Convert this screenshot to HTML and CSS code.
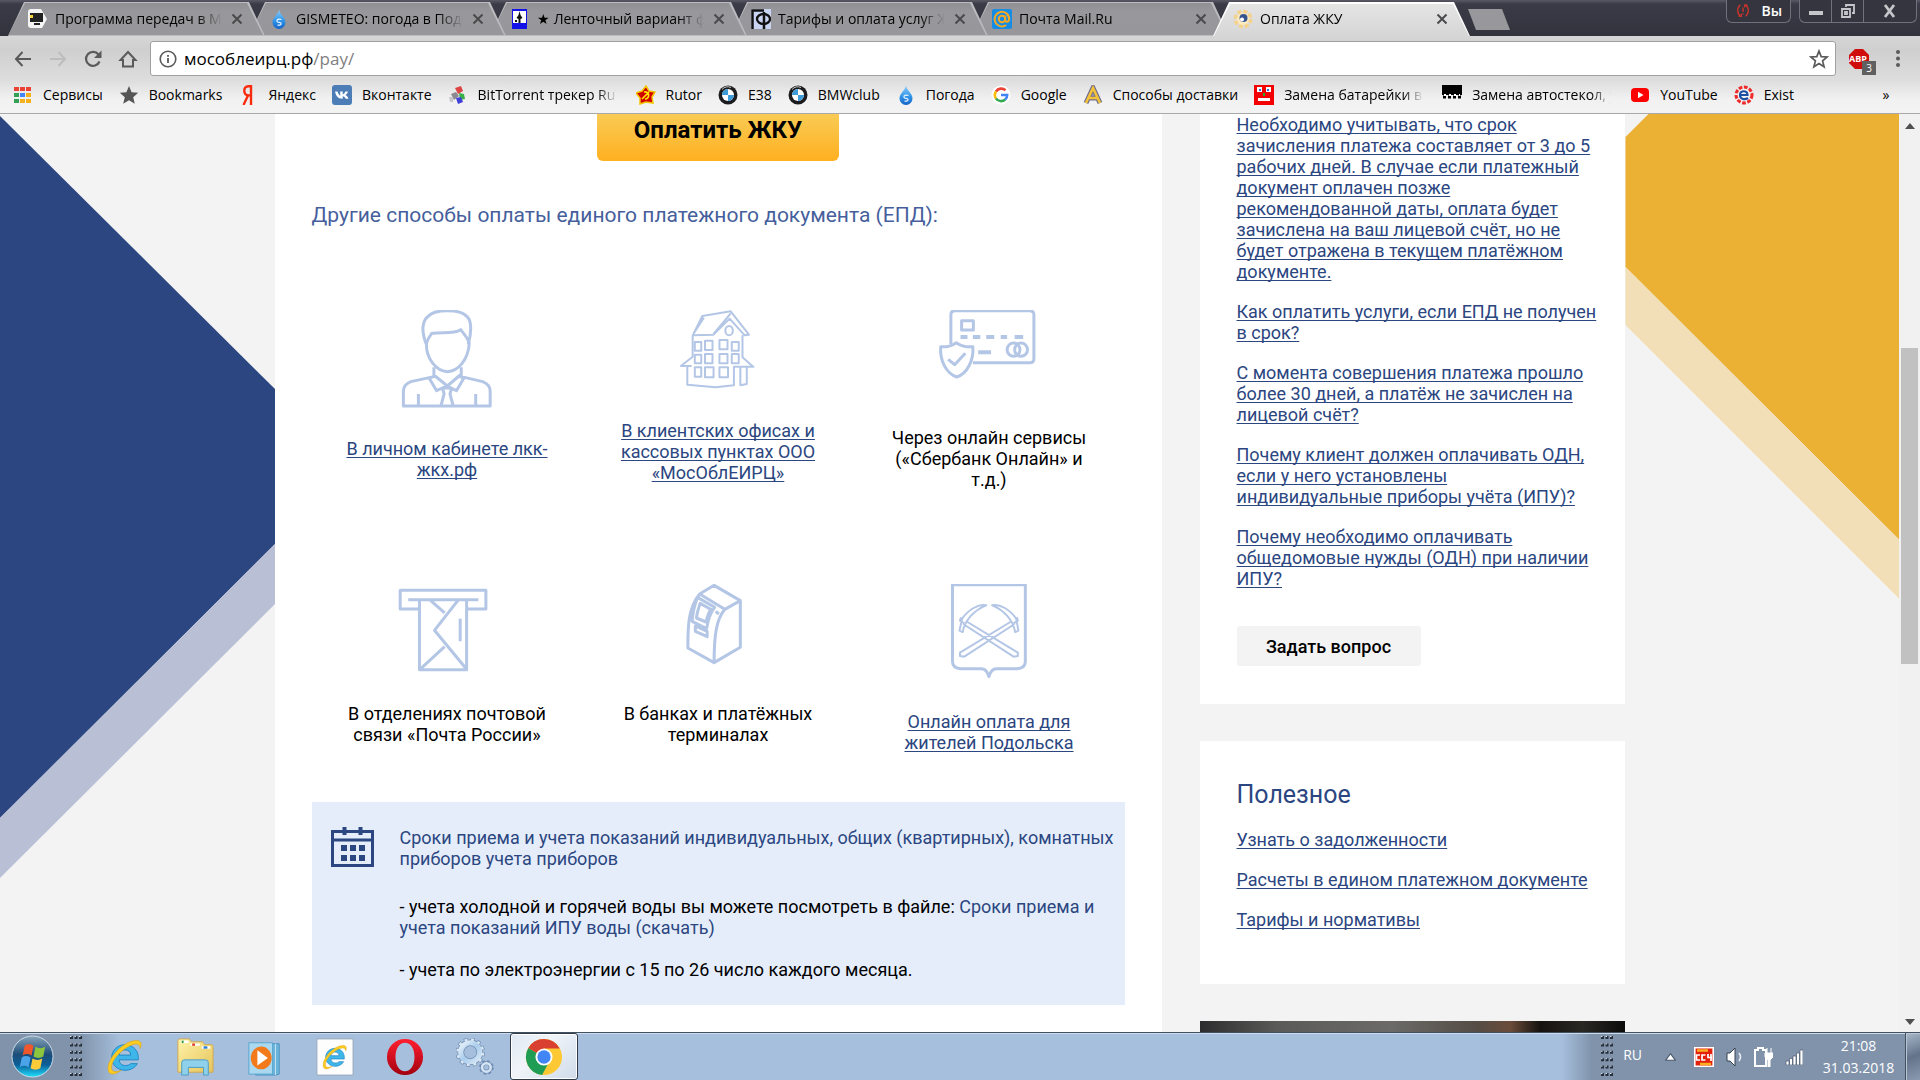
FILE: index.html
```html
<!DOCTYPE html>
<html lang="ru">
<head>
<meta charset="utf-8">
<title>Оплата ЖКУ</title>
<link rel="stylesheet" href="styles.css">
</head>
<body>
<svg class="defs" aria-hidden="true">
  <defs>
    <symbol id="x" viewBox="0 0 12 12"><path d="M1.500 1.500l9 9M10.500 1.500l-9 9" stroke="#4a4a4c" stroke-width="2" fill="none"/></symbol>
    <linearGradient id="water" x1="0" y1="0" x2="0" y2="1"><stop offset="0" stop-color="#8fd0fa"/><stop offset=".6" stop-color="#2f93e8"/><stop offset="1" stop-color="#1663c4"/></linearGradient>
    <symbol id="drop" viewBox="0 0 20 20"><path d="M10 0C10 5 3.500 8 3.500 13.500a6.500 6.500 0 0 0 13 0C16.500 8 10 5 10 0z" fill="url(#water)"/><path d="M12.500 10.500c-3-1-5 0-4.500 1.800s3.500.4 4 2-1.500 2.200-3.500 1.700" stroke="#e8f6ff" stroke-width="1.200" fill="none"/></symbol>
    <symbol id="bmw" viewBox="0 0 20 20"><circle cx="10" cy="10" r="9.500" fill="#1c1c1e"/><circle cx="10" cy="10" r="6" fill="#fff"/><path d="M10 10V4a6 6 0 0 0-6 6zM10 10v6a6 6 0 0 0 6-6z" fill="#3d9bd8"/><path d="M4 4.500a8 8 0 0 1 9-2" stroke="#c9c9c9" fill="none"/></symbol>
    <symbol id="ie" viewBox="0 0 40 40"><path d="M33 27c-3 5-8 7-13 7C12 34 6 28 6 20.500S12 7 20 7s14 6 14 13.500V23H14c0 4 3 6 6.500 6 2.500 0 4.500-1 5.500-2zM14 18h12c0-3.500-2.500-5.500-6-5.500s-6 2-6 5.500z" fill="#3fb6ea" stroke="#1f86c4"/><path d="M36 11C40 2 32 0 21 6 9 13-1 28 3 36c3 4 9 1 13-2-5 2-9 2-10-1-2-6 6-17 16-23 8-5 14-5 14 1z" fill="#fbcb22" stroke="#d9a514" stroke-width=".6"/></symbol>
    <symbol id="grip" viewBox="0 0 12 42"><path d="M0 1.500h12M0 8.900h12M0 16.300h12M0 23.700h12M0 31.100h12M0 38.500h12" stroke="#26303d" stroke-width="3" stroke-dasharray="3 1.500"/><path d="M0 .5h12M0 7.900h12M0 15.300h12M0 22.700h12M0 30.100h12M0 37.500h12" stroke="#dbe3ec" stroke-dasharray="1.500 3"/></symbol>
    <linearGradient id="orb" x1="0" y1="0" x2="0" y2="1"><stop offset="0" stop-color="#8aa5ba"/><stop offset=".45" stop-color="#1d4d78"/><stop offset=".7" stop-color="#0b5f98"/><stop offset="1" stop-color="#1fe0ff"/></linearGradient>
    <linearGradient id="opera" x1="0" y1="0" x2="0" y2="1"><stop offset="0" stop-color="#ff1f30"/><stop offset="1" stop-color="#a3000f"/></linearGradient>
    <linearGradient id="folder" x1="0" y1="0" x2="1" y2="1"><stop offset="0" stop-color="#fff3a8"/><stop offset="1" stop-color="#e6c45c"/></linearGradient>
    <linearGradient id="steel" x1="0" y1="0" x2="1" y2="1"><stop offset="0" stop-color="#eaf3fb"/><stop offset=".5" stop-color="#a9cdec"/><stop offset="1" stop-color="#d8e8f6"/></linearGradient>
  </defs>
</svg>

<header class="browser">
  <div class="tabstrip">
    <nav class="tabs" aria-label="Вкладки">
      <div class="tab t1"><svg class="fav" viewBox="0 0 20 20"><path d="M0 3q0-3 3-3h10l6 10-5 9H3q-3 0-3-3z" fill="#f4f4f4"/><path d="M2 4h13v9H2z" fill="#222"/><path d="M6 15h6" stroke="#222" stroke-width="2"/><path d="M2 6h3v3H2z" fill="#f5d33d"/></svg><span>Программа передач в Москве</span><button aria-label="Закрыть"><svg viewBox="0 0 12 12"><use href="#x"/></svg></button></div>
      <div class="tab t2"><svg class="fav"><use href="#drop"/></svg><span>GISMETEO: погода в Подольске</span><button aria-label="Закрыть"><svg viewBox="0 0 12 12"><use href="#x"/></svg></button></div>
      <div class="tab t3"><svg class="fav" viewBox="0 0 20 20"><path d="M2 0h15v20H2z" fill="#1212e8"/><path d="M3 2h13v12H3z" fill="#fff"/><path d="M9.500 2l1 4 2 3-2 1v4h-2v-4l-2-1 2-3zM5 11h2v2H5z" fill="#111"/></svg><span>★ Ленточный вариант фундамента</span><button aria-label="Закрыть"><svg viewBox="0 0 12 12"><use href="#x"/></svg></button></div>
      <div class="tab t4"><svg class="fav" viewBox="0 0 20 20"><path d="M0 0h20v20H0z" fill="#c9d4f3"/><path d="M1.500 20V1.500H13M13 3v17" stroke="#111" stroke-width="2.500" fill="none"/><ellipse cx="12.500" cy="10" rx="6.500" ry="5" stroke="#111" stroke-width="2.300" fill="none"/></svg><span>Тарифы и оплата услуг ЖКХ</span><button aria-label="Закрыть"><svg viewBox="0 0 12 12"><use href="#x"/></svg></button></div>
      <div class="tab t5"><svg class="fav" viewBox="0 0 20 20"><rect width="20" height="20" rx="2" fill="#168de2"/><circle cx="10" cy="10" r="3.200" stroke="#f7a823" stroke-width="2" fill="none"/><path d="M13.200 6.500V11c0 3 4 2 4-1a7.300 7.300 0 1 0-3 6" stroke="#f7a823" stroke-width="2" fill="none"/></svg><span>Почта Mail.Ru</span><button aria-label="Закрыть"><svg viewBox="0 0 12 12"><use href="#x"/></svg></button></div>
      <div class="tab active"><svg class="fav" viewBox="0 0 20 20"><circle cx="10" cy="10" r="7.500" fill="none" stroke="#f5d28c" stroke-width="4" stroke-dasharray="4 1.900"/><circle cx="10" cy="10" r="6" fill="#fdebc0"/><circle cx="10.500" cy="9" r="4" fill="#35548f"/><circle cx="9" cy="10.500" r="2" fill="#fff"/></svg><span>Оплата ЖКУ</span><button aria-label="Закрыть"><svg viewBox="0 0 12 12"><use href="#x"/></svg></button></div>
    </nav>
    <button class="newtab" aria-label="Новая вкладка"></button>
    <div class="wincontrols">
      <button class="user"><svg viewBox="0 0 16 16"><path d="M5 1C1 4 1 11 5 14M11 1c4 3 4 10 0 13M8 4v5M8 10.500V12M3 14h3v-3M13 1h-3v3" stroke="#c8342a" stroke-width="1.600" fill="none"/></svg>Вы</button>
      <div class="winbtns">
        <button aria-label="Свернуть"><svg viewBox="0 0 14 14"><path d="M0 7h14v4H0z" fill="#c6c6ca"/></svg></button>
        <button aria-label="Свернуть в окно"><svg viewBox="0 0 14 14"><path d="M5 3V1h8v8h-2M1 5h8v8H1zM4 8h2v2H4z" stroke="#c6c6ca" stroke-width="1.800" fill="none"/></svg></button>
        <button class="wclose" aria-label="Закрыть окно"><svg viewBox="0 0 14 14"><path d="M2 1l9 12M11 1L2 13" stroke="#c6c6ca" stroke-width="2.800" fill="none"/></svg></button>
      </div>
    </div>
  </div>

  <div class="toolbar">
    <button aria-label="Назад"><svg viewBox="0 0 20 20"><path d="M18 10H3M9.500 3L3 10l6.500 7" stroke="#5a5a5a" stroke-width="2" fill="none"/></svg></button>
    <button aria-label="Вперёд"><svg viewBox="0 0 20 20"><path d="M2 10h15M10.500 3l6.500 7-6.500 7" stroke="#bdbdbd" stroke-width="2" fill="none"/></svg></button>
    <button aria-label="Обновить"><svg viewBox="0 0 20 20"><path d="M16.500 12.500A7 7 0 1 1 15.500 5.500" stroke="#5a5a5a" stroke-width="2.200" fill="none"/><path d="M18.500 1.500V9H11z" fill="#5a5a5a"/></svg></button>
    <button aria-label="Домашняя страница"><svg viewBox="0 0 20 20"><path d="M10 3l7.500 8H15v6.500H5V11H2.500z" stroke="#5a5a5a" stroke-width="2" fill="none"/></svg></button>
    <div class="omnibox">
      <svg viewBox="0 0 18 18"><circle cx="9" cy="9" r="7.800" stroke="#5a5a5a" stroke-width="1.600" fill="none"/><path d="M9 8v5M9 5v1.700" stroke="#5a5a5a" stroke-width="1.800"/></svg>
      <p class="url">мособлеирц.рф<span>/pay/</span></p>
      <button aria-label="Добавить в закладки"><svg viewBox="0 0 20 20"><path d="M10 2l2.200 5.600 6 .4-4.600 3.900 1.500 5.900L10 14.500l-5.100 3.300 1.500-5.900L1.800 8l6-.4z" stroke="#5a5a5a" stroke-width="1.700" fill="none"/></svg></button>
    </div>
    <button class="abp" aria-label="Adblock Plus"><svg viewBox="0 0 20 20"><path d="M6 0h8l6 6v8l-6 6H6l-6-6V6z" fill="#d00d0d"/></svg><b>ABP</b><i>3</i></button>
    <button aria-label="Меню"><svg viewBox="0 0 20 20"><circle cx="10" cy="3" r="2" fill="#5a5a5a"/><circle cx="10" cy="9.500" r="2" fill="#5a5a5a"/><circle cx="10" cy="16" r="2" fill="#5a5a5a"/></svg></button>
  </div>

  <nav class="bookmarks" aria-label="Закладки">
    <a href="#"><svg viewBox="0 0 20 20"><path d="M1 2h5v4H1zM7 2h5v4H7zM13 2h5v4h-5z" fill="#ea4335"/><path d="M1 8h5v4H1zM1 14h5v4H1z" fill="#34a055"/><path d="M7 8h5v4H7z" fill="#4285f4"/><path d="M13 8h5v4h-5zM7 14h5v4H7zM13 14h5v4h-5z" fill="#f6b01c"/></svg><span>Сервисы</span></a>
    <a href="#"><svg viewBox="0 0 20 20"><path d="M10 1l2.600 6.300 6.600.5-5 4.400 1.600 6.600L10 15.200l-5.800 3.600 1.600-6.600-5-4.400 6.600-.5z" fill="#555"/></svg><span>Bookmarks</span></a>
    <a href="#"><svg viewBox="0 0 20 20"><path d="M13 20V1.200h-2.500c-3 0-4.200 2-4.200 4.500 0 3 1.400 4.700 4.700 4.700h2M10 10.500L5.500 20" stroke="#fa2b0c" stroke-width="2.400" fill="none"/></svg><span>Яндекс</span></a>
    <a href="#"><svg viewBox="0 0 20 20"><rect width="20" height="20" rx="3" fill="#4d7db6"/><path d="M3 6.500h2.500c1 2.500 1.800 4 2.700 4.200V6.500h2.500v3c1.200-.3 2-1.600 2.800-3H16c-.6 1.800-1.600 2.900-2.600 3.600 1.200.6 2.300 1.700 3.100 3.600h-2.800c-.6-1.300-1.600-2.200-3-2.400v2.400C6.500 13.900 4.200 11.500 3 6.500z" fill="#fff"/></svg><span>Вконтакте</span></a>
    <a href="#"><svg viewBox="0 0 20 20"><path d="M7 3l6-2 2 5-5 3z" fill="#d44"/><path d="M3 9l5-2 3 4-5 4z" fill="#8a8a90"/><path d="M11 8l5 1 1 5-5 1z" fill="#38b048"/><path d="M8 13l5-1 2 5-5 2z" fill="#4040d8"/><path d="M1 12h4v5H2z" fill="#c6c6ca"/></svg><span class="cut">BitTorrent трекер RuTracker</span></a>
    <a href="#"><svg viewBox="0 0 20 20"><path d="M10 1l3 5 6 1-3 5 1 6-7-1-6 2v-6L0 8l6-2z" fill="#d10000" stroke="#f3c400" stroke-width="1.500"/><path d="M6 14l7-7M8 7c6-1 6 7 1 7" stroke="#ffe600" stroke-width="1.700" fill="none"/></svg><span>Rutor</span></a>
    <a href="#"><svg><use href="#bmw"/></svg><span>E38</span></a>
    <a href="#"><svg><use href="#bmw"/></svg><span>BMWclub</span></a>
    <a href="#"><svg><use href="#drop"/></svg><span>Погода</span></a>
    <a href="#"><svg viewBox="0 0 20 20"><circle cx="10" cy="10" r="9.500" fill="#fff"/><path d="M5 6.500A6.200 6.200 0 0 1 14.500 5.300" stroke="#ea4335" stroke-width="2.600" fill="none"/><path d="M5 13.500a6.200 6.200 0 0 1 0-7" stroke="#fbbc05" stroke-width="2.600" fill="none"/><path d="M14.200 14.500A6.200 6.200 0 0 1 5 13.500" stroke="#34a853" stroke-width="2.600" fill="none"/><path d="M10 10h6.200a6.200 6.200 0 0 1-2 4.500" stroke="#4285f4" stroke-width="2.600" fill="none"/></svg><span>Google</span></a>
    <a href="#"><svg viewBox="0 0 20 20"><path d="M3 18L10 3l7 15M6 13h8" stroke="#6f6d8c" stroke-width="5" fill="none"/><path d="M3 18L10 3l7 15M6 13h8" stroke="#f5c33a" stroke-width="2.600" fill="none"/></svg><span>Способы доставки</span></a>
    <a href="#"><svg viewBox="0 0 20 20"><path d="M0 0h20v20H0z" fill="#f40000"/><path d="M3 2h5v5H3zM12 2h5v5h-5zM4 13h12v3H4z" fill="#fff"/><path d="M5 4h2v2H5zM13 4h2v2h-2z" fill="#2b6be0"/><path d="M9 8h2v3H9z" fill="#22b030"/></svg><span class="cut">Замена батарейки в iPhone</span></a>
    <a href="#"><svg viewBox="0 0 20 20"><path d="M0 0h20v10H0z" fill="#000"/><path d="M1 12h18M3 8h14" stroke="#000" stroke-width="3" stroke-dasharray="3 2"/><path d="M2 10h16" stroke="#fff" stroke-width="2" stroke-dasharray="2 3"/></svg><span class="cut">Замена автостекол, установка</span></a>
    <a href="#"><svg viewBox="0 0 20 20"><rect x="1" y="3" width="18" height="14" rx="4" fill="#f00"/><path d="M8 6.800v6.400l5.500-3.200z" fill="#fff"/></svg><span>YouTube</span></a>
    <a href="#"><svg viewBox="0 0 20 20"><circle cx="10" cy="10" r="7.500" fill="none" stroke="#ee2a2a" stroke-width="4" stroke-dasharray="3.500 1.500"/><circle cx="10" cy="10" r="6.500" fill="#f3f3f3"/><path d="M5.500 10h8c0-5-7.500-5-7.500 0 0 4.500 5 5 8 3" stroke="#1d4fa3" stroke-width="2.200" fill="none"/></svg><span>Exist</span></a>
    <button class="more" aria-label="Другие закладки">»</button>
  </nav>
</header>

<div class="viewport">
  <div class="page">
    <div class="deco"><svg class="left" viewBox="0 0 275 918"><path d="M-5-3L275 275v155L-5 709z" fill="#2b4680"/><path d="M275 430v60L-5 769v-60z" fill="#b9c0d5"/></svg></div>

    <main class="content">
      <button class="pay">Оплатить ЖКУ</button>
      <h2>Другие способы оплаты единого платежного документа (ЕПД):</h2>
      <div class="ways">
        <div class="way">
          <svg class="h128" viewBox="0 0 120 128"><g transform="translate(-87 -30) scale(.5357 .3333)">
            <path d="M236 193C225 150 229 120 240 108c8-14 20-16 35-16s30 5 37 18c9 14 8 50 2 83"/><path d="M236 190c2-10 4-18 10-30 20-5 40 3 54-11 5 12 12 20 16 40-2 50-20 84-41 86-21-2-40-40-39-85z"/><path d="M250 262v28l-43 15c-10 6-14 18-14 30v43h162v-43c0-12-4-24-14-30l-40-15v-28M221 342v36M328 342v36M249 290l-8 4 14 38 19-14 18 14 14-38-8-4M250 285l25 33 24-33M266 324h17l-3 18 6 36M266 324l3 18-6 36"/></g></svg>
          <a href="#">В личном кабинете лкк-жкх.рф</a>
        </div>
        <div class="way">
          <svg class="h110 thin" viewBox="0 0 120 110"><g transform="translate(-358 -30) scale(.5357 .3333)">
            <path d="M751 108l53-14 34 70-8 2-28-50-30 48-39 2zM754 113l-20 50M804 100l-32 62M733 168v62l-22 28h12v56l53 8 34-6V260h12v56l12-4v-52h12l-20-28v-66M723 258h8M823 260h25"/><ellipse cx="801" cy="152" rx="7" ry="14"/><path d="M737 186h12v26h-12zM756 182h14v28h-14zM783 180h15v28h-15zM806 186h13v26h-13zM737 224h12v26h-12zM756 222h14v28h-14zM783 222h15v28h-15zM806 222h13v28h-13zM737 262h12v28h-12zM756 262h16v30h-16zM783 262h16v30h-16z"/></g></svg>
          <a href="#">В клиентских офисах и кассовых пунктах ООО «МосОблЕИРЦ»</a>
        </div>
        <div class="way">
          <svg class="h117" viewBox="0 0 120 117"><g transform="translate(-629 -30) scale(.5357 .3333)">
            <path d="M1215 192v-88q0-12 8-12h139q8 0 8 12v132q0 12-8 12h-106M1235 122h22v28h-22z"/><path d="M1233 171h13M1256 171h14M1281 171h15M1308 171h12M1334 171h16M1266 217h24" stroke-width="4"/><ellipse cx="1332" cy="209" rx="12" ry="20"/><ellipse cx="1346" cy="209" rx="12" ry="20"/><path d="M1196 200c12 2 20-2 29-12 9 10 18 14 31 12 2 40-10 80-30 91-20-11-32-50-30-91zM1210 238l12 16 20-34"/></g></svg>
          <p>Через онлайн сервисы («Сбербанк Онлайн» и т.д.)</p>
        </div>
        <div class="way">
          <svg class="h119" viewBox="0 0 120 119"><g transform="translate(-87 -24) scale(.5357 .3333)">
            <path d="M223 147h-36V91h160v56h-36M202 119h131M223 119v210h88V119M242 119l28 40M296 119l-45 92 60 117M270 260l-46 68M299 176v68"/></g></svg>
          <p>В отделениях почтовой связи «Почта России»</p>
        </div>
        <div class="way">
          <svg class="h119" viewBox="0 0 120 119"><g transform="translate(-358 -24) scale(.5357 .3333)">
            <path d="M773 76l49 46v140l-49 46-49-44c0-60 0-120 22-162zM746 102l47 46 29-26M793 148c-16 30-20 80-20 160M742 112c-5 22-9 44-10 72l27 22c3-30 6-46 15-64zM747 130c-3 14-6 26-7 44l18 12c2-16 4-26 9-38zM738 198l22 16v16l-22-16zM776 154l6 8"/></g></svg>
          <p>В банках и платёжных терминалах</p>
        </div>
        <div class="way">
          <svg class="h127 thin" viewBox="0 0 120 127"><g transform="translate(-629 -24) scale(.5357 .3333)">
            <path d="M1218 74h136v230q0 22-16 22h-38q-10 0-14 24-4-24-14-24h-38q-16 0-16-22z" stroke-width="3"/><path d="M1281 136c-14-6-34 14-45 40l-5 36 6 4c4-36 22-66 44-80zM1292 136c14-6 34 14 45 40l4 36-6 4c-4-36-21-66-43-80zM1234 172l-2 10 8 8M1338 172l2 10-8 8M1246 186l94 92v10l-8 2-94-98M1326 186l-94 92v10l8 2 94-98"/></g></svg>
          <a href="#">Онлайн оплата для жителей Подольска</a>
        </div>
      </div>
      <section class="notice">
        <svg viewBox="0 0 44 40"><path d="M0 3h43v37H0zM3 14.500v22.500h37V14.500zM3 6v5.500h37V6z" fill="#2b4680" fill-rule="evenodd"/><path d="M13.500 0v8M29.500 0v8" stroke="#2b4680" stroke-width="4"/><path d="M10 18h6v6h-6zM19 18h6v6h-6zM28 18h6v6h-6zM10 28h6v6h-6zM19 28h6v6h-6zM28 28h6v6h-6z" fill="#2b4680"/></svg>
        <div>
          <p class="blue">Сроки приема и учета показаний индивидуальных, общих (квартирных), комнатных приборов учета приборов</p>
          <p>- учета холодной и горячей воды вы можете посмотреть в файле: <a href="#">Сроки приема и учета показаний ИПУ воды (скачать)</a></p>
          <p>- учета по электроэнергии с 15 по 26 число каждого месяца.</p>
        </div>
      </section>
    </main>

    <aside class="side">
      <section class="card faq">
        <ul>
          <li><a href="#">Необходимо учитывать, что срок зачисления платежа составляет от 3 до 5 рабочих дней. В случае если платежный документ оплачен позже<br>рекомендованной даты, оплата будет зачислена на ваш лицевой счёт, но не будет отражена в текущем платёжном документе.</a></li>
          <li><a href="#">Как оплатить услуги, если ЕПД не получен в срок?</a></li>
          <li><a href="#">С момента совершения платежа прошло более 30 дней, а платёж не зачислен на лицевой счёт?</a></li>
          <li><a href="#">Почему клиент должен оплачивать ОДН, если у него установлены<br>индивидуальные приборы учёта (ИПУ)?</a></li>
          <li><a href="#">Почему необходимо оплачивать общедомовые нужды (ОДН) при наличии ИПУ?</a></li>
        </ul>
        <button class="ask">Задать вопрос</button>
      </section>
      <section class="card useful">
        <h3>Полезное</h3>
        <ul>
          <li><a href="#">Узнать о задолженности</a></li>
          <li><a href="#">Расчеты в едином платежном документе</a></li>
          <li><a href="#">Тарифы и нормативы</a></li>
        </ul>
      </section>
      <div class="banner"></div>
    </aside>

    <div class="deco"><svg class="right" viewBox="0 0 274 918"><path d="M0 23L24-1h256v433L0 153z" fill="#ebb134"/><path d="M0 153l280 279v59L0 211z" fill="#f2dfb8"/></svg></div>
  </div>
  <div class="scrollbar">
    <svg viewBox="0 0 10 6"><path d="M0 6l5-6 5 6z" fill="#505050"/></svg>
    <div class="thumb"></div>
    <svg viewBox="0 0 10 6"><path d="M0 0l5 6 5-6z" fill="#505050"/></svg>
  </div>
</div>

<footer class="taskbar">
  <button class="start" aria-label="Пуск"><svg viewBox="0 0 44 44"><circle cx="22" cy="22" r="21" fill="url(#orb)" stroke="#cfdbe6"/><path d="M14 11q4-3 9 0l-2 10q-5-3-9 0z" fill="#f0572a"/><path d="M25 12q5 3 10 0l-2 10q-5 3-10 0z" fill="#8cc63e"/><path d="M11 23q4-3 9 0l-2 10q-5-3-9 0z" fill="#4ba3e8"/><path d="M22 24q5 3 10 0l-2 10q-5 3-10 0z" fill="#fccb3a"/></svg></button>
  <svg class="grip"><use href="#grip"/></svg>
  <div class="apps">
    <button aria-label="Internet Explorer"><svg><use href="#ie"/></svg></button>
    <button aria-label="Проводник"><svg viewBox="0 0 40 40"><path d="M2 3q0-2 2-2h10l2 3h12l2 3h7q2 0 2 2v27H2z" fill="url(#folder)" stroke="#cfa850"/><path d="M5 4h8M15 7h10M27 10h9" stroke="#fff" stroke-width="2.500"/><path d="M6 4h2" stroke="#2f9e48" stroke-width="2.500"/><path d="M17 7h3" stroke="#e04330" stroke-width="2.500"/><path d="M29 10h4" stroke="#2a7fd6" stroke-width="2.500"/><path d="M6 39V26q0-3 3-3h22q3 0 3 3v13h-5V31H13v8z" fill="#8fd0ea" stroke="#4d9cc0"/></svg></button>
    <button aria-label="Windows Media"><svg viewBox="0 0 40 40"><path d="M10 6h25v32l-4 1H10z" fill="#6cb4dc" stroke="#4a94c0"/><path d="M31 6v33" stroke="#c5e6f6"/><path d="M3 5h25v33H3z" fill="#a9d8f0" stroke="#58a4cc"/><ellipse cx="16" cy="21" rx="11" ry="12" fill="#f27a1b"/><path d="M12 13l11 8-11 8z" fill="#fff"/></svg></button>
    <button aria-label="Страница IE"><svg viewBox="0 0 40 40"><path d="M1 1h38v38H1z" fill="#fdfdfd" stroke="#9ab"/><use href="#ie" x="6" y="6" width="28" height="28"/></svg></button>
    <button aria-label="Opera"><svg viewBox="0 0 40 40"><path d="M20 1a19 19 0 1 0 0 38 19 19 0 1 0 0-38zm0 4c6 0 10 6 10 15s-4 15-10 15-10-6-10-15 4-15 10-15z" fill="url(#opera)" fill-rule="evenodd"/></svg></button>
    <button aria-label="Параметры"><svg viewBox="0 0 40 40"><circle cx="15" cy="15" r="13.500" fill="none" stroke="#6f8db3" stroke-width="4" stroke-dasharray="4 3.070"/><circle cx="15" cy="15" r="10" fill="none" stroke="#6f8db3" stroke-width="7"/><circle cx="15" cy="15" r="10" fill="none" stroke="url(#steel)" stroke-width="5.500"/><circle cx="15" cy="15" r="13.500" fill="none" stroke="#dbe8f4" stroke-width="2.500" stroke-dasharray="3 4.070" stroke-dashoffset="-.5"/><circle cx="32" cy="31" r="6.500" fill="none" stroke="#6f8db3" stroke-width="2.500" stroke-dasharray="2.800 2.300"/><circle cx="32" cy="31" r="4.500" fill="none" stroke="#6f8db3" stroke-width="4"/><circle cx="32" cy="31" r="4.500" fill="none" stroke="#d5e5f4" stroke-width="2.600"/></svg></button>
    <button class="running" aria-label="Google Chrome"><svg viewBox="0 0 40 40"><circle cx="20" cy="20" r="19" fill="#fcc934"/><path d="M20 20L3.500 10.500A19 19 0 0 0 18 39l8-15z" fill="#1f9d55"/><path d="M20 20L3.500 10.500A19 19 0 0 1 36.500 11H20z" fill="#d9402f"/><circle cx="20" cy="20" r="9" fill="#fff"/><circle cx="20" cy="20" r="7" fill="#4285f4"/></svg></button>
  </div>
  <div class="tray">
    <svg class="grip"><use href="#grip"/></svg>
    <span class="lang">RU</span>
    <svg class="up" viewBox="0 0 10 7"><path d="M.5 6.500L5 .5l4.500 6z" fill="#fff" stroke="#4a5a70"/></svg>
    <svg class="cc" viewBox="0 0 20 20"><path d="M.8.800h18.400v18.400H.8z" fill="#e2200c" stroke="#fff" stroke-width="1.600"/><path d="M3 3.500h11M6 17h11" stroke="#ffae1f" stroke-width="2.500"/><path d="M6 8H2.500v5H6M11.500 8H8v5h3.500M14 7v3.500h4M17 7v7" stroke="#fff" stroke-width="1.700" fill="none"/></svg>
    <svg class="vol" viewBox="0 0 18 20"><path d="M1 6h3l5-5v18l-5-5H1z" fill="#fff" stroke="#34414f"/><path d="M13 6q3 4 0 8" stroke="#e8eef5" stroke-width="1.600" fill="none"/></svg>
    <svg class="bat" viewBox="0 0 20 20"><path d="M2 3h3V1h5v2h3v16H2z" fill="#8093ab" stroke="#fff" stroke-width="2"/><path d="M14 1v5M18 1v5M12 6h8v4l-3 3v7h-2v-7l-3-3z" fill="#fff" stroke="#fff"/></svg>
    <svg class="sig" viewBox="0 0 18 16"><path d="M1 12h3v4H1zM4.500 9.500h3V16h-3zM8 7h3v9H8zM11.500 4h3v12h-3zM15 1h3v15h-3z" fill="#fff" stroke="#4a5a70" stroke-width=".7"/></svg>
    <time class="clock">21:08<br>31.03.2018</time>
    <button class="desktop" aria-label="Показать рабочий стол"></button>
  </div>
</footer>
</body>
</html>
```
FILE: styles.css
```css
* { box-sizing: border-box; margin: 0; padding: 0; }

body {
  display: flex;
  flex-direction: column;
  height: 100vh;
  overflow: hidden;
  font: 18px/21px Roboto, "Liberation Sans", sans-serif;
  color: #000;
  background: #f3f3f3;
}

button { border: 0; background: none; font: inherit; color: inherit; }
ul { list-style: none; }
svg { display: block; flex: none; }
.defs { position: absolute; width: 0; height: 0; }

/* Browser chrome */
.browser { flex: none; font: 14px/20px "Open Sans", "Noto Sans", sans-serif; }

.tabstrip {
  display: flex;
  height: 36px;
  padding-left: 8px;
  background: linear-gradient(#5a5865, #3a3b46 4px, #32333d);
}
.tabs { display: flex; isolation: isolate; }
.tab {
  position: relative;
  display: flex;
  align-items: center;
  width: 257px;
  margin-right: -16px;
  padding: 2px 20px 0 20px;
  background: #bbbbc0;
  clip-path: polygon(16px 2px, 241px 2px, 100% 100%, 0 100%);
}
.tab::before {
  content: "";
  position: absolute;
  inset: 0;
  z-index: -1;
  background: linear-gradient(#8d8d92, #98989c 12px, #97979b);
  clip-path: polygon(17px 3px, 239px 3px, 255px 35px, 0 35px);
}
.tab span {
  flex: 1;
  margin: 0 7px;
  overflow: hidden;
  white-space: nowrap;
  -webkit-mask-image: linear-gradient(90deg, #000 85%, transparent);
  mask-image: linear-gradient(90deg, #000 85%, transparent);
}
.tab button svg { width: 12px; height: 12px; margin: 0 2px; }
.t1 { z-index: 5; }
.t2 { z-index: 4; }
.t3 { z-index: 3; }
.t4 { z-index: 2; }
.t5 { z-index: 1; }
.tab.active { z-index: 6; background: #fff; }
.tab.active::before { background: linear-gradient(#e6e6e6, #d6d6d6); clip-path: polygon(17px 4px, 240px 4px, 256px 36px, 1px 36px); }
.fav { width: 20px; height: 20px; }

.newtab {
  width: 42px;
  height: 21px;
  margin: 9px 0 0 14px;
  background: #98989c;
  clip-path: polygon(0 0, 34px 0, 100% 100%, 8px 100%);
}

.wincontrols { display: flex; gap: 8px; height: 23px; margin-left: auto; padding-right: 3px; color: #fff; }
.user, .winbtns {
  display: flex;
  align-items: center;
  border: 1px solid #70717b;
  border-top: 0;
  border-radius: 0 0 6px 6px;
  background: #34353e;
}
.user { gap: 10px; padding: 0 8px; font-weight: 600; }
.user svg { width: 16px; height: 14px; }
.winbtns button { display: grid; place-items: center; width: 32px; height: 100%; border-right: 1px solid #70717b; }
.winbtns .wclose { width: 52px; border: 0; }
.winbtns svg { width: 14px; height: 14px; }

.toolbar {
  display: flex;
  align-items: center;
  height: 45px;
  padding-left: 5px;
  background: linear-gradient(#d6d6d6, #cfcfcf 14px, #dedede);
}
.toolbar > button { display: grid; place-items: center; width: 35px; }
.toolbar svg { width: 20px; height: 20px; }
.omnibox {
  display: flex;
  align-items: center;
  flex: 1;
  height: 35px;
  margin: 0 5px 0 5px;
  padding: 0 6px 0 8px;
  border: 1px solid #a0a0a0;
  border-radius: 3px;
  background: #fff;
}
.omnibox > svg { width: 18px; height: 18px; }
.url { flex: 1; margin-left: 7px; font-size: 17px; line-height: 24px; }
.url span { color: #808080; }
.toolbar .abp { position: relative; }
.abp b { position: absolute; left: 8px; top: 3px; color: #fff; font: 700 9px/14px "Open Sans", sans-serif; }
.abp i {
  position: absolute;
  left: 21px;
  top: 12px;
  width: 14px;
  background: #606060;
  color: #fff;
  font: 10px/14px "Open Sans", sans-serif;
}
.toolbar .abp + button { width: 44px; }

.bookmarks {
  display: flex;
  align-items: center;
  gap: 16px;
  height: 33px;
  padding: 0 20px 4px 13px;
  border-bottom: 1px solid #a8a8a8;
  background: linear-gradient(#dedede, #f1f1f1 18px, #f3f3f3);
}
.bookmarks a { display: flex; gap: 10px; color: #000; text-decoration: none; white-space: nowrap; }
.bookmarks svg { width: 20px; height: 20px; }
.bookmarks .cut {
  width: 142px;
  overflow: hidden;
  -webkit-mask-image: linear-gradient(90deg, #000 84%, transparent 98%);
  mask-image: linear-gradient(90deg, #000 84%, transparent 98%);
}
.more { margin-left: auto; width: 28px; }

/* Page */
.viewport { display: flex; flex: 1; min-height: 0; }
.page { display: flex; flex: 1; min-width: 0; overflow: hidden; }
.deco { flex: 1; overflow: hidden; display: flex; }
.deco svg { width: 275px; height: 918px; }
.deco:first-child { justify-content: flex-end; }

.content { flex: 0 1 887px; padding: 0 37px; background: #fff; }
.pay {
  display: block;
  width: 242px;
  height: 47px;
  margin: 0 auto;
  padding-bottom: 14px;
  border-radius: 0 0 6px 6px;
  background: linear-gradient(#f9cb55, #ffb020);
  font-weight: 700;
  font-size: 24px;
}
h2 { margin: 40px 0 81px; font: 21px/28px Roboto, sans-serif; color: #465f9c; }
.ways { display: grid; grid-template-columns: repeat(3, 1fr); grid-auto-rows: 274px; }
.way { display: flex; flex-direction: column; align-items: center; padding: 0 30px; text-align: center; }
.way svg { width: 120px; fill: none; stroke: #b4c6e6; stroke-width: 3; stroke-linejoin: round; }
.way svg * { vector-effect: non-scaling-stroke; }
.way .thin { stroke-width: 2; }
.h110 { height: 110px; }
.h117 { height: 117px; }
.h119 { height: 119px; }
.h127 { height: 127px; }
.h128 { height: 128px; }
.way a, .side a { color: #2b4680; text-underline-offset: 2px; text-decoration-skip-ink: none; }

.notice { display: flex; gap: 25px; margin-top: -56px; padding: 25px 4px 25px 19px; background: #e5edfb; }
.notice svg { width: 44px; height: 40px; }
.notice p + p { margin-top: 27px; }
.notice p:last-child { margin-top: 21px; }
.notice .blue, .notice a { color: #2b4680; text-decoration: none; }

.side { flex: 0 1 425px; margin-left: 38px; }
.card { margin-bottom: 37px; background: #fff; }
.faq { padding: 0 20px 38px 37px; }
.faq li + li { margin-top: 19px; }
.ask { display: block; width: 184px; height: 40px; margin-top: 37px; border-radius: 3px; background: #f3f3f3; font-weight: 500; }
.useful { padding: 38px 20px 54px 37px; }
.useful h3 { margin-bottom: 18px; font: 25px/32px Roboto, sans-serif; color: #2b4680; }
.useful li + li { margin-top: 19px; }
.banner { height: 60px; background: linear-gradient(90deg, #2c2c2e, #5a5a58 18%, #6b6a68 45%, #544c45 65%, #6a4c3a 73%, #15120f 80%, #2a2823 90%, #0b0b0b); }

.scrollbar {
  display: flex;
  flex-direction: column;
  align-items: center;
  width: 21px;
  padding: 9px 0 7px;
  background: #f1f1f1;
}
.scrollbar svg { width: 10px; height: 6px; }
.thumb { width: 17px; height: 35%; margin: 219px 0 auto; background: #c1c1c1; }

/* Taskbar */
.taskbar {
  display: flex;
  align-items: center;
  flex: none;
  height: 48px;
  border-top: 1px solid #42505f;
  box-shadow: inset 0 1px #cbdcee;
  background: linear-gradient(90deg, #8093ab 80px, #a6bfdc 120px calc(100% - 358px), #8093ab calc(100% - 328px));
  font: 14px/22px "Open Sans", "Noto Sans", sans-serif;
  color: #fff;
}
.start { margin-left: 11px; }
.start svg { width: 43px; height: 43px; }
.grip { width: 12px; height: 42px; }
.start + .grip { margin-left: 16px; }
.apps { display: flex; align-self: stretch; margin-left: 8px; }
.apps button { display: grid; place-items: center; width: 70px; }
.apps svg { width: 38px; height: 38px; }
.apps .running { width: 68px; border: 1px solid #2f3b49; border-radius: 3px; background: linear-gradient(135deg, #dfe8f2, #f0f4f9 40%, #cfdbe9); box-shadow: inset 0 0 0 1px #fff; }
.tray { display: flex; align-items: center; align-self: stretch; margin-left: auto; }
.lang { margin: 0 23px 4px 10px; }
.up { width: 11px; height: 8px; margin-right: 18px; }
.cc { width: 20px; height: 20px; margin-right: 12px; }
.vol { width: 18px; height: 20px; margin-right: 9px; }
.bat { width: 20px; height: 20px; margin-right: 12px; }
.sig { width: 18px; height: 16px; }
.clock { width: 102px; padding-left: 9px; text-align: center; }
.desktop { width: 15px; height: 100%; border-left: 1px solid #42505f; background: linear-gradient(160deg, #a9b8ca, #62738a 50%, #8a9bb1); box-shadow: inset 1px 1px #b8c6d6; }
```
